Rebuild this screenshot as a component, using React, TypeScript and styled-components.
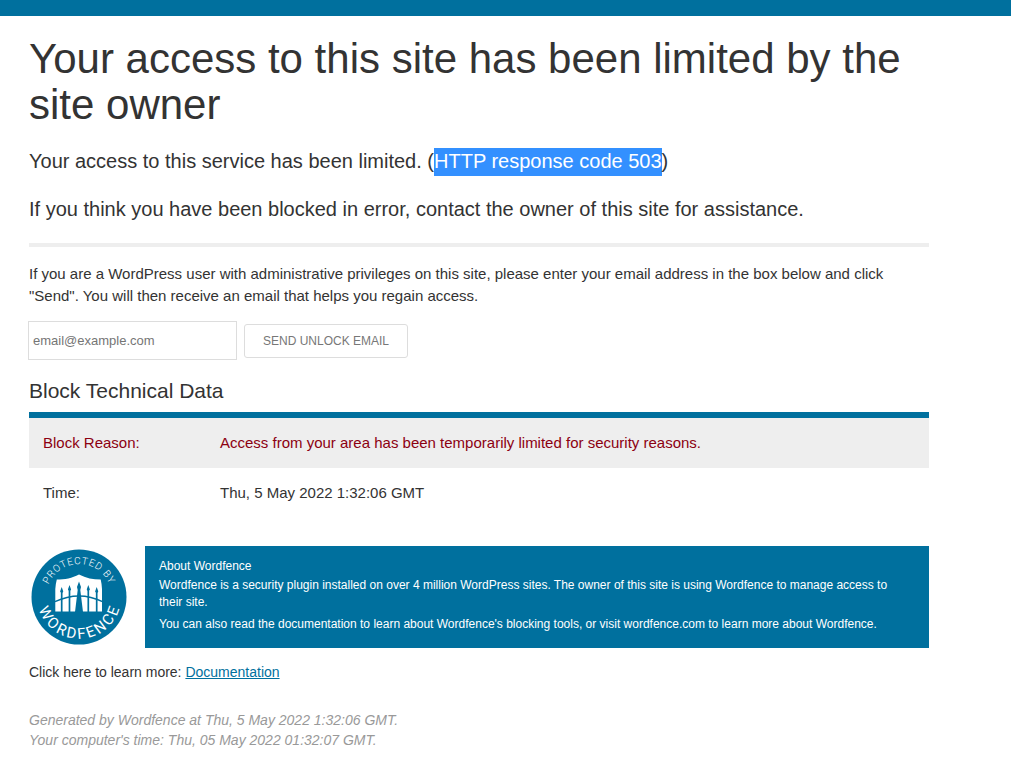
import React from "react";
import styled, { createGlobalStyle } from "styled-components";

const BLUE = "#00709e";

const GlobalStyle = createGlobalStyle`
  *, *::before, *::after { box-sizing: border-box; }
  body {
    margin: 0;
    background: #fff;
    color: #333;
    font-family: "Liberation Sans", Arial, Helvetica, sans-serif;
    font-size: 15px;
    line-height: 22px;
  }
`;

const TopBar = styled.div`
  height: 16px;
  background: ${BLUE};
`;

const Page = styled.main`
  max-width: 958px;
  padding: 20px 29px;
`;

const Title = styled.h1`
  margin: 0 0 19px;
  font-size: 42px;
  font-weight: 400;
  line-height: 46px;
`;

const Lead = styled.p`
  margin: 0 0 20px;
  font-size: 20px;
  line-height: 28px;
`;

const Selected = styled.mark`
  padding: 2px 0 4px;
  background: #3390ff;
  color: #fff;
`;

const Divider = styled.hr`
  height: 4px;
  margin: 0 0 16px;
  border: 0;
  background: #eee;
`;

const Text = styled.p`
  margin: 0;
`;

const UnlockForm = styled.form`
  display: flex;
  align-items: center;
  gap: 7px;
  margin: 14px 0 20px -1px;
`;

const EmailInput = styled.input`
  width: 209px;
  height: 39px;
  padding: 0 4px;
  border: 1px solid #ddd;
  background: #fff;
  color: #333;
  font: 400 13px "Liberation Sans", Arial, sans-serif;
  &::placeholder { color: #757575; opacity: 1; }
`;

const SendButton = styled.button`
  height: 34px;
  padding: 0 18px;
  border: 1px solid #ddd;
  border-radius: 3px;
  background: #fff;
  color: #777;
  font: 400 12px "Liberation Sans", Arial, sans-serif;
  text-transform: uppercase;
`;

const SectionTitle = styled.h2`
  margin: 0 0 10px;
  font-size: 21px;
  font-weight: 400;
  line-height: 22px;
`;

const DataTable = styled.table`
  width: 100%;
  border-collapse: collapse;
  border-top: 6px solid ${BLUE};
`;

const DataRow = styled.tr<{ $reason?: boolean }>`
  background: ${(p) => (p.$reason ? "#eee" : "transparent")};
  color: ${(p) => (p.$reason ? "#8c0011" : "inherit")};
  th, td {
    padding: 14px;
    font-weight: 400;
    text-align: left;
    vertical-align: top;
  }
  th { width: 177px; }
`;

const About = styled.section`
  display: flex;
  align-items: center;
  gap: 16px;
  margin-top: 28px;
`;

const Badge = styled.svg`
  flex: none;
  width: 100px;
  height: 100px;
`;

const AboutPanel = styled.div`
  flex: 1;
  padding: 12px 24px 10px 14px;
  background: ${BLUE};
  color: #fff;
  font-size: 12px;
  line-height: 17px;
`;

const AboutTitle = styled.h3`
  margin: 0 0 2px;
  font-size: 12px;
  font-weight: 400;
`;

const AboutText = styled.p`
  margin: 0 0 5px;
`;

const LearnMore = styled.p`
  margin: 14px 0 28px;
  font-size: 14px;
  line-height: 20px;
`;

const DocLink = styled.a`
  color: ${BLUE};
`;

const Generated = styled.p`
  margin: 0;
  color: #999;
  font-size: 14px;
  font-style: italic;
  line-height: 20px;
`;

function WordfenceBadge() {
  return (
    <Badge viewBox="0 0 100 100" role="img" aria-label="Protected by Wordfence">
      <defs>
        <path id="arc-top" d="M17 50A33 33 0 0 1 83 50" />
        <path id="arc-bottom" d="M8.6 42.7A42 42 0 1 0 91.4 42.7" />
      </defs>
      <circle cx="50" cy="50" r="47.5" fill={BLUE} />
      <g fill="#fff" fontFamily="Roboto, sans-serif" textAnchor="middle">
        <text fontSize="10" fontWeight="300">
          <textPath href="#arc-top" startOffset="50%" letterSpacing="0.7">
            PROTECTED BY
          </textPath>
        </text>
        <text fontSize="15">
          <textPath href="#arc-bottom" startOffset="51%" letterSpacing="2.3">
            WORDFENCE
          </textPath>
        </text>
      </g>
      <path
        fill="#fff"
        d="M50 27.5C43 31.2 36 32.5 27.8 32.5Q26.8 36 26.3 42V64.5H73V42Q72.6 36 71.7 32.5C64 32.5 57 31.2 50 27.5Z"
      />
      <path fill="none" stroke={BLUE} strokeWidth="1.7" d="M32.7 65V44M40.5 65V42M59.3 65V42M67.7 65V44" />
      <path fill="none" stroke={BLUE} strokeWidth="1.4" d="M26 54.7Q38 49 50 49T73.5 54.7" />
      <path
        fill={BLUE}
        d="M46 65L48.7 43H51.3L54 65ZM50 34.5L52 40L51.3 43H48.7L48 40ZM32.7 40L34.3 44.5L32.7 46.5L31.1 44.5ZM40.5 38L42.1 42.5L40.5 44.5L38.9 42.5ZM59.3 38L60.9 42.5L59.3 44.5L57.7 42.5ZM67.7 40L69.3 44.5L67.7 46.5L66.1 44.5Z"
      />
    </Badge>
  );
}

export default function App() {
  return (
    <>
      <GlobalStyle />
      <TopBar />
      <Page>
        <Title>Your access to this site has been limited by the site owner</Title>
        <Lead>
          Your access to this service has been limited. (<Selected>HTTP response code 503</Selected>)
        </Lead>
        <Lead>
          If you think you have been blocked in error, contact the owner of this site for assistance.
        </Lead>
        <Divider />
        <Text>
          If you are a WordPress user with administrative privileges on this site, please enter your
          email address in the box below and click "Send". You will then receive an email that helps
          you regain access.
        </Text>
        <UnlockForm onSubmit={(e) => e.preventDefault()}>
          <EmailInput type="email" placeholder="email@example.com" aria-label="Email address" />
          <SendButton type="submit">Send Unlock Email</SendButton>
        </UnlockForm>
        <SectionTitle>Block Technical Data</SectionTitle>
        <DataTable>
          <tbody>
            <DataRow $reason>
              <th scope="row">Block Reason:</th>
              <td>Access from your area has been temporarily limited for security reasons.</td>
            </DataRow>
            <DataRow>
              <th scope="row">Time:</th>
              <td>Thu, 5 May 2022 1:32:06 GMT</td>
            </DataRow>
          </tbody>
        </DataTable>
        <About>
          <WordfenceBadge />
          <AboutPanel>
            <AboutTitle>About Wordfence</AboutTitle>
            <AboutText>
              Wordfence is a security plugin installed on over 4 million WordPress sites. The owner
              of this site is using Wordfence to manage access to their site.
            </AboutText>
            <AboutText>
              You can also read the documentation to learn about Wordfence's blocking tools, or
              visit wordfence.com to learn more about Wordfence.
            </AboutText>
          </AboutPanel>
        </About>
        <LearnMore>
          Click here to learn more: <DocLink href="#documentation">Documentation</DocLink>
        </LearnMore>
        <Generated>Generated by Wordfence at Thu, 5 May 2022 1:32:06 GMT.</Generated>
        <Generated>Your computer's time: Thu, 05 May 2022 01:32:07 GMT.</Generated>
      </Page>
    </>
  );
}
